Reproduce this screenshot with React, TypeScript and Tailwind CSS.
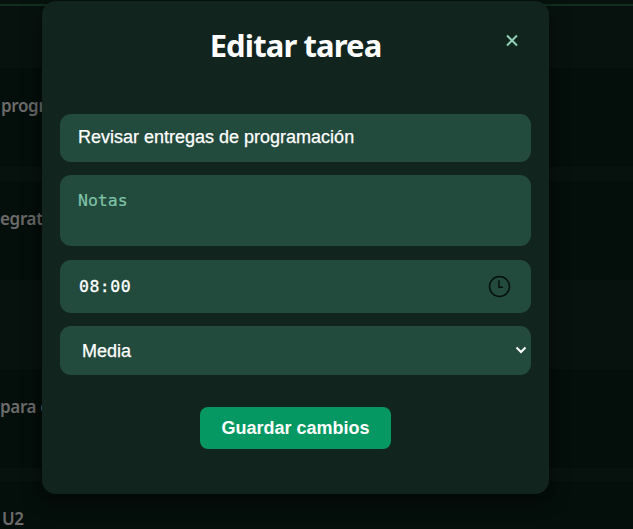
const uiFont = 'font-["Segoe_UI","Noto_Sans",sans-serif]';
const arial = 'font-["Liberation_Sans",Arial,sans-serif]';
const mono = 'font-["DejaVu_Sans_Mono",monospace]';

function TaskRow({ label, className }: { label: string; className: string }) {
  return (
    <div className={`shrink-0 overflow-hidden whitespace-nowrap bg-[#040e0a] text-[17px] leading-6 font-semibold tracking-[-0.35px] text-[#6b6b6b] ${className}`}>
      {label}
    </div>
  );
}

function TaskList() {
  return (
    <div className="flex h-[529px] flex-col overflow-hidden bg-[#07120e] pt-1">
      <div className="h-0.5 shrink-0 bg-[#12301f]" />
      <TaskRow label="progr" className="mt-[62px] h-[99px] pt-[26px] pl-px" />
      <TaskRow label="egrat" className="mt-3.5 h-[99px] pt-[26px]" />
      <TaskRow label="para e" className="mt-[89px] h-[99px] pt-[26px]" />
      <TaskRow label="U2" className="mt-[13px] h-12 pt-[26px] pl-0.5" />
    </div>
  );
}

export default function App() {
  return (
    <div className={`relative h-[529px] w-[633px] overflow-hidden ${uiFont}`}>
      <TaskList />
      <div className="absolute top-px left-[42px] flex h-[493px] w-[507px] flex-col rounded-[14px] bg-[#12241e] px-[18px] text-white shadow-[0_4px_20px_rgba(0,0,0,0.5)]">
        <div className="relative flex h-[113px] shrink-0 justify-center pt-[22px]">
          <h2 className="text-[31px] leading-[44px] font-bold tracking-[-0.9px] whitespace-nowrap">Editar tarea</h2>
          <button aria-label="Cerrar" className="absolute top-[33px] right-[13px] text-[#8fd0b5]">
            <svg width="12" height="13" viewBox="0 0 12 13" fill="none" stroke="currentColor" strokeWidth="2">
              <path d="M1 1.5L11 11.5M11 1.5L1 11.5" />
            </svg>
          </button>
        </div>
        <div className={`h-12 shrink-0 rounded-[11px] bg-[#234b3d] pt-[11px] pl-[18px] text-[18px] leading-6 whitespace-nowrap [-webkit-text-stroke:0.25px] ${arial}`}>
          Revisar entregas de programación
        </div>
        <div className={`mt-[13px] h-[71px] shrink-0 rounded-[11px] bg-[#234b3d] pt-3.5 pl-[18px] text-[16.5px] leading-6 text-[#7fc4a8] [-webkit-text-stroke:0.2px] ${mono}`}>
          Notas
        </div>
        <div className={`mt-3.5 flex h-[53px] shrink-0 items-center justify-between rounded-[11px] bg-[#234b3d] pr-5 pl-[19px] text-[16.5px] tracking-[0.5px] ${mono}`}>
          <span className="pt-0.5 [-webkit-text-stroke:0.3px]">08:00</span>
          <svg width="23" height="23" viewBox="0 0 23 23" fill="none" stroke="#06100c">
            <circle cx="11.5" cy="11.5" r="10" strokeWidth="1.5" />
            <path d="M11 5.2V12.2H15" strokeWidth="1.5" />
          </svg>
        </div>
        <div className={`mt-[13px] flex h-[49px] shrink-0 items-center justify-between rounded-[11px] bg-[#234b3d] pr-1 pb-px pl-[22px] text-[18px] ${arial}`}>
          <span className="pt-[3px] [-webkit-text-stroke:0.25px]">Media</span>
          <svg width="12" height="8" viewBox="0 0 12 8" fill="none" stroke="white" strokeWidth="2">
            <path d="M1.5 1.5L6 6L10.5 1.5" />
          </svg>
        </div>
        <button className={`mt-8 h-[42px] w-[191px] shrink-0 self-center rounded-lg bg-[#059862] text-[18px] font-bold whitespace-nowrap ${arial}`}>
          Guardar cambios
        </button>
      </div>
    </div>
  );
}
